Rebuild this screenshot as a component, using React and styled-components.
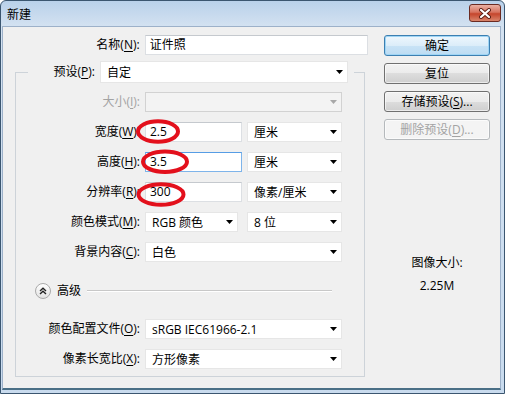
import React from "react";
import styled, { createGlobalStyle } from "styled-components";

const GlobalStyle = createGlobalStyle`
  html, body { margin: 0; padding: 0; background: #fff; }
  body {
    font-family: "Open Sans", "Noto Sans CJK SC", sans-serif;
    font-size: 12px;
    color: #000;
  }
  * { box-sizing: border-box; }
`;

const Window = styled.div`
  position: relative;
  width: 505px;
  height: 394px;
  border: 1px solid #3b5670;
  border-radius: 6px 6px 0 0;
  background: linear-gradient(#b9d1ea 0, #d4e2f1 26px, #c9dbee 100%);
  display: flex;
  flex-direction: column;
  overflow: hidden;
`;

const TitleBar = styled.div`
  height: 25px;
  flex: none;
  display: flex;
  align-items: flex-start;
  justify-content: space-between;
  padding: 0 3px 0 6px;
`;

const Title = styled.div`
  line-height: 25px;
  font-family: "Noto Sans CJK SC", sans-serif;
`;

const CloseButton = styled.div`
  margin-top: 3px;
  width: 32px;
  height: 18px;
  border: 1px solid #6b2b22;
  border-radius: 3px;
  background: linear-gradient(#eab1a4, #d7735f 45%, #c5452c 55%, #d9856c);
  display: flex;
  align-items: center;
  justify-content: center;
`;

const Client = styled.div`
  flex: 1;
  margin: 0 3px 3px 1px;
  border: 1px solid #9db1c9;
  border-bottom: 2px solid #4a6f86;
  background: #f0f0f0;
  display: flex;
  align-items: flex-start;
`;

const LeftPane = styled.div`
  width: 365px;
  padding: 8px 0 0 12px;
  display: flex;
  flex-direction: column;
`;

const RightPane = styled.div`
  width: 106px;
  margin-left: 16px;
  padding-top: 8px;
  display: flex;
  flex-direction: column;
  gap: 7px;
`;

const Row = styled.div`
  display: flex;
  align-items: center;
  height: ${(p) => p.$h || 20}px;
  margin-top: ${(p) => p.$space || 0}px;
`;

const Label = styled.div`
  width: ${(p) => p.$w}px;
  margin-right: 5px;
  text-align: right;
  line-height: 20px;
  white-space: nowrap;
  color: ${(p) => (p.$disabled ? "#a3a3a3" : "#000")};
`;

const U = styled.span`
  text-decoration: underline;
  text-underline-offset: 2px;
`;

const TextBox = styled.div`
  width: ${(p) => p.$w}px;
  height: 20px;
  background: #fff;
  border: 1px solid ${(p) => (p.$focus ? "#7eb4ea" : "#dcdfe3")};
  border-top-color: ${(p) => (p.$focus ? "#569de5" : "#c5c9ce")};
  padding-left: 4px;
  line-height: 18px;
  white-space: nowrap;
`;

const Select = styled.div`
  width: ${(p) => p.$w}px;
  height: ${(p) => p.$h || 20}px;
  margin-left: ${(p) => p.$ml || 0}px;
  background: ${(p) => (p.$disabled ? "#f3f3f3" : "#fff")};
  border: 1px solid ${(p) => (p.$disabled ? "#d2d2d2" : "#e6e6e6")};
  display: flex;
  align-items: center;
  justify-content: space-between;
  padding: 0 4px 0 6px;
  white-space: nowrap;
`;

const Group = styled.fieldset`
  margin: 6px 0 0 0;
  width: 350px;
  padding: 0 0 7px 0;
  border: 1px solid #cdd3d9;
  min-width: 0;
`;

const Legend = styled.legend`
  margin-left: 12px;
  padding: 0 6px 0 0;
  display: flex;
  align-items: center;
`;

const GroupBody = styled.div`
  padding-top: 9px;
  display: flex;
  flex-direction: column;
  gap: 10px;
`;

const AdvancedRow = styled.div`
  display: flex;
  align-items: center;
  height: 16px;
  margin-top: 11px;
  padding: 0 32px 0 19px;
  gap: 6px;
`;

const AdvancedText = styled.span`
  line-height: 16px;
`;

const Rule = styled.div`
  flex: 1;
  height: 2px;
  border-top: 1px solid #c8c8c8;
  border-bottom: 1px solid #fff;
`;

const Button = styled.div`
  height: 21px;
  border: 1px solid ${(p) => (p.$default ? "#3c7fb1" : p.$disabled ? "#b5b9bc" : "#707070")};
  border-radius: 3px;
  background: ${(p) =>
    p.$disabled
      ? "#f4f4f4"
      : p.$default
      ? "linear-gradient(#eef7fd, #dcedf9 50%, #c9e3f6 50%, #bcdcf3)"
      : "linear-gradient(#f2f2f2, #ebebeb 50%, #dddddd 50%, #cfcfcf)"};
  box-shadow: ${(p) => (p.$default ? "inset 0 0 0 1px #9fd5f5" : "inset 0 0 0 1px rgba(255,255,255,0.6)")};
  color: ${(p) => (p.$disabled ? "#a3a3a3" : "#000")};
  text-align: center;
  line-height: 19px;
  white-space: nowrap;
`;

const SizeInfo = styled.div`
  margin-top: 108px;
  display: flex;
  flex-direction: column;
  align-items: center;
  gap: 7px;
  line-height: 16px;
`;

const Overlay = styled.svg`
  position: absolute;
  left: -1px;
  top: -1px;
  pointer-events: none;
`;

const Arrow = ({ disabled }) => (
  <svg width="7" height="4" viewBox="0 0 7 4">
    <polygon points="0,0 7,0 3.5,4" fill={disabled ? "#a8a8a8" : "#000"} />
  </svg>
);

const Drop = ({ w, h, ml, disabled, children }) => (
  <Select $w={w} $h={h} $ml={ml} $disabled={disabled}>
    <span>{children}</span>
    <Arrow disabled={disabled} />
  </Select>
);

const CollapseIcon = () => (
  <svg width="16" height="16" viewBox="0 0 16 16">
    <defs>
      <linearGradient id="cg" x1="0" y1="0" x2="0" y2="1">
        <stop offset="0" stopColor="#ffffff" />
        <stop offset="1" stopColor="#e2e2e2" />
      </linearGradient>
    </defs>
    <circle cx="8" cy="8" r="7.5" fill="url(#cg)" stroke="#a9a9a9" />
    <path d="M5 8 L8 5.3 L11 8" fill="none" stroke="#222" strokeWidth="1.4" />
    <path d="M5 11 L8 8.3 L11 11" fill="none" stroke="#222" strokeWidth="1.4" />
  </svg>
);

export default function App() {
  return (
    <>
      <GlobalStyle />
      <Window>
        <TitleBar>
          <Title>新建</Title>
          <CloseButton>
            <svg width="14" height="11" viewBox="0 0 14 11">
              <path d="M3 2 L11 9 M11 2 L3 9" stroke="#5a1d14" strokeWidth="4" strokeLinecap="round" />
              <path d="M3 2 L11 9 M11 2 L3 9" stroke="#fff" strokeWidth="2.2" strokeLinecap="round" />
            </svg>
          </CloseButton>
        </TitleBar>
        <Client>
          <LeftPane>
            <Row>
              <Label $w={125}>名称(<U>N</U>):</Label>
              <TextBox $w={224}>证件照</TextBox>
            </Row>
            <Group>
              <Legend>
                <Label $w={67}>预设(<U>P</U>):</Label>
                <Drop w={248} h={22}>自定</Drop>
              </Legend>
              <GroupBody>
                <Row>
                  <Label $w={124} $disabled>大小(<U>I</U>):</Label>
                  <Drop w={197} disabled />
                </Row>
                <Row>
                  <Label $w={124}>宽度(<U>W</U>):</Label>
                  <TextBox $w={97}>2.5</TextBox>
                  <Drop w={95} ml={5}>厘米</Drop>
                </Row>
                <Row>
                  <Label $w={124}>高度(<U>H</U>):</Label>
                  <TextBox $w={97} $focus>3.5</TextBox>
                  <Drop w={95} ml={5}>厘米</Drop>
                </Row>
                <Row>
                  <Label $w={124}>分辨率(<U>R</U>):</Label>
                  <TextBox $w={97}>300</TextBox>
                  <Drop w={95} ml={5}>像素/厘米</Drop>
                </Row>
                <Row>
                  <Label $w={124}>颜色模式(<U>M</U>):</Label>
                  <Drop w={93}>RGB 颜色</Drop>
                  <Drop w={95} ml={9}>8 位</Drop>
                </Row>
                <Row>
                  <Label $w={124}>背景内容(<U>C</U>):</Label>
                  <Drop w={197}>白色</Drop>
                </Row>
                <AdvancedRow>
                  <CollapseIcon />
                  <AdvancedText>高级</AdvancedText>
                  <Rule />
                </AdvancedRow>
                <Row $space={10}>
                  <Label $w={124}>颜色配置文件(<U>O</U>):</Label>
                  <Drop w={197}>sRGB IEC61966-2.1</Drop>
                </Row>
                <Row>
                  <Label $w={124}>像素长宽比(<U>X</U>):</Label>
                  <Drop w={197}>方形像素</Drop>
                </Row>
              </GroupBody>
            </Group>
          </LeftPane>
          <RightPane>
            <Button $default>确定</Button>
            <Button>复位</Button>
            <Button>存储预设(<U>S</U>)...</Button>
            <Button $disabled>删除预设(<U>D</U>)...</Button>
            <SizeInfo>
              <span>图像大小:</span>
              <span>2.25M</span>
            </SizeInfo>
          </RightPane>
        </Client>
        <Overlay width="505" height="394" viewBox="0 0 505 394">
          <g fill="none" stroke="#e3101c" strokeWidth="4">
            <ellipse cx="158" cy="131.5" rx="20" ry="10.2" />
            <ellipse cx="165" cy="161.7" rx="22" ry="10.2" />
            <ellipse cx="161" cy="194.5" rx="22.5" ry="10.2" />
          </g>
        </Overlay>
      </Window>
    </>
  );
}
